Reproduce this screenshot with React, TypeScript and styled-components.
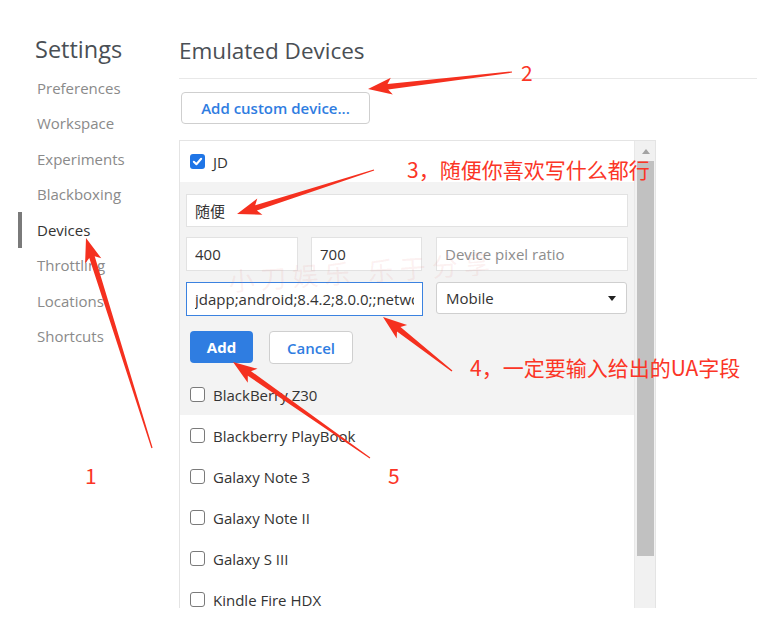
import React from "react";
import styled, { createGlobalStyle } from "styled-components";

const GlobalStyle = createGlobalStyle`
  html, body { margin: 0; padding: 0; background: #fff; }
  body {
    font-family: "Open Sans", "Noto Sans", "Noto Sans CJK SC", sans-serif;
    color: #333;
  }
`;

// layout

const Page = styled.div`
  position: relative;
  display: flex;
  width: 757px;
  height: 617px;
  overflow: hidden;
  background: #fff;
`;

const Sidebar = styled.nav`
  width: 179px;
  flex-shrink: 0;
  padding-top: 35px;
  display: flex;
  flex-direction: column;
`;

const SideTitle = styled.div`
  padding-left: 35px;
  height: 30px;
  line-height: 28px;
  font-size: 23.5px;
  color: #4a4f55;
  margin-bottom: 5px;
`;

const NavItem = styled.div<{ $active?: boolean }>`
  height: 35.5px;
  display: flex;
  align-items: center;
  margin-left: 18px;
  padding-left: 15px;
  border-left: 4px solid ${p => (p.$active ? "#7a7a7a" : "transparent")};
  font-size: 15px;
  color: ${p => (p.$active ? "#333" : "#8a8a8a")};
`;

const Main = styled.main`
  flex: 1;
  padding-top: 37px;
  display: flex;
  flex-direction: column;
`;

const MainTitle = styled.div`
  height: 30px;
  line-height: 28px;
  font-size: 22.5px;
  color: #4a4f55;
`;

const Divider = styled.div`
  margin-top: 11px;
  height: 1px;
  background: #e8e8e8;
`;

const Toolbar = styled.div`
  padding: 13px 0 16px 2px;
  display: flex;
`;

const GhostButton = styled.button<{ $w: number; $h?: number }>`
  width: ${p => p.$w}px;
  height: ${p => p.$h ?? 32}px;
  border: 1px solid #cfcfcf;
  border-radius: 4px;
  background: #fff;
  color: #2f7de1;
  font-family: inherit;
  font-size: 15px;
  font-weight: 600;
  padding: 0;
`;

const PrimaryButton = styled.button`
  width: 63px;
  height: 32px;
  border: none;
  border-radius: 4px;
  background: #2f7de1;
  color: #fff;
  font-family: inherit;
  font-size: 15px;
  font-weight: 700;
  padding: 0;
`;

const Panel = styled.div`
  width: 477px;
  height: 468px;
  box-sizing: border-box;
  border: 1px solid #e4e4e4;
  border-bottom: none;
  display: flex;
  overflow: hidden;
`;

const ListCol = styled.div`
  flex: 1;
  display: flex;
  flex-direction: column;
`;

const Row = styled.label<{ $hover?: boolean; $h?: number }>`
  flex-shrink: 0;
  height: ${p => p.$h ?? 41}px;
  display: flex;
  align-items: center;
  gap: 8px;
  padding-left: 10px;
  background: ${p => (p.$hover ? "#f3f3f3" : "#fff")};
  font-size: 15px;
  color: #333;
`;

const Box = styled.span<{ $checked?: boolean }>`
  width: 15px;
  height: 15px;
  box-sizing: border-box;
  border-radius: 3px;
  border: ${p => (p.$checked ? "none" : "1px solid #7a7a7a")};
  background: ${p => (p.$checked ? "#1f75e6" : "#fff")};
  display: flex;
  align-items: center;
  justify-content: center;
`;

const Editor = styled.div`
  flex-shrink: 0;
  background: #f3f3f3;
  padding: 12px 6px 10px 6px;
  display: flex;
  flex-direction: column;
`;

const FieldRow = styled.div<{ $mb?: number }>`
  display: flex;
  margin-bottom: ${p => p.$mb ?? 0}px;
`;

const Field = styled.input<{ $w?: number; $h?: number; $focus?: boolean; $ml?: number }>`
  width: ${p => (p.$w ? `${p.$w}px` : "100%")};
  height: ${p => p.$h ?? 34}px;
  margin: 0 0 0 ${p => p.$ml ?? 0}px;
  box-sizing: border-box;
  background: #fff;
  border: ${p => (p.$focus ? "1.5px solid #3b82e0" : "1px solid #e2e2e2")};
  border-radius: 0;
  outline: none;
  padding: 0 8px;
  font-family: "Open Sans", "Noto Sans CJK SC", sans-serif;
  font-size: 15px;
  color: #333;
  &::placeholder { color: #8d8d8d; }
`;

const Select = styled.div`
  width: 191px;
  height: 32px;
  margin-left: 13px;
  box-sizing: border-box;
  background: #fff;
  border: 1px solid #cfcfcf;
  border-radius: 3px;
  padding: 0 10px 0 9px;
  display: flex;
  align-items: center;
  justify-content: space-between;
  font-size: 15px;
  color: #333;
`;

const Caret = styled.span`
  width: 0;
  height: 0;
  border-left: 4.5px solid transparent;
  border-right: 4.5px solid transparent;
  border-top: 5px solid #222;
`;

const ButtonRow = styled.div`
  display: flex;
  gap: 16px;
  margin-top: 15px;
  padding-left: 4px;
`;

const Scrollbar = styled.div`
  width: 21px;
  flex-shrink: 0;
  background: #f1f1f1;
  border-left: 1px solid #e8e8e8;
  display: flex;
  flex-direction: column;
  align-items: center;
`;

const ScrollArrow = styled.div`
  height: 20px;
  display: flex;
  align-items: center;
  justify-content: center;
  &::after {
    content: "";
    border-left: 4px solid transparent;
    border-right: 4px solid transparent;
    border-bottom: 5px solid #a3a3a3;
  }
`;

const Thumb = styled.div`
  width: 17px;
  height: 395px;
  background: #c1c1c1;
`;

// annotations drawn over the screenshot

const Overlay = styled.svg`
  position: absolute;
  left: 0;
  top: 0;
  pointer-events: none;
`;

const Note = styled.span<{ $x: number; $y: number; $size?: number }>`
  position: absolute;
  left: ${p => p.$x}px;
  top: ${p => p.$y}px;
  font-family: "Noto Sans CJK SC", "Noto Sans", sans-serif;
  font-size: ${p => p.$size ?? 21}px;
  line-height: 1;
  color: #fb3526;
  white-space: nowrap;
  pointer-events: none;
`;

const Watermark = styled.span`
  position: absolute;
  left: 228px;
  top: 252px;
  transform: rotate(-4deg);
  font-family: "Noto Sans CJK SC", sans-serif;
  font-size: 26px;
  letter-spacing: 6px;
  color: rgba(226, 110, 110, 0.1);
  pointer-events: none;
`;

const arrowPoints = (tx: number, ty: number, hx: number, hy: number) => {
  const len = Math.hypot(hx - tx, hy - ty);
  const dx = (hx - tx) / len;
  const dy = (hy - ty) / len;
  const nx = -dy;
  const ny = dx;
  const L = 24;
  const pt = (d: number, w: number) =>
    `${(hx - dx * d + nx * w).toFixed(1)},${(hy - dy * d + ny * w).toFixed(1)}`;
  const tail = (w: number) => `${(tx + nx * w).toFixed(1)},${(ty + ny * w).toFixed(1)}`;
  return [
    tail(0.6),
    pt(L - 4, 2.8),
    pt(L, 8.5),
    pt(0, 0),
    pt(L, -8.5),
    pt(L - 4, -2.8),
    tail(-0.6),
  ].join(" ");
};

const ARROWS: [number, number, number, number][] = [
  [152, 448, 86, 238],
  [512, 72, 368, 89],
  [374, 170, 237, 214],
  [452, 371, 383, 317],
  [370, 458, 233, 362],
];

const NAV = ["Preferences", "Workspace", "Experiments", "Blackboxing", "Devices", "Throttling", "Locations", "Shortcuts"];

const DEVICES = ["BlackBerry Z30", "Blackberry PlayBook", "Galaxy Note 3", "Galaxy Note II", "Galaxy S III", "Kindle Fire HDX"];

const Check = ({ checked }: { checked?: boolean }) => (
  <Box $checked={checked}>
    {checked && (
      <svg width="11" height="11" viewBox="0 0 12 12">
        <path d="M2 6.3 L4.8 9 L10 3" fill="none" stroke="#fff" strokeWidth="2.2" strokeLinecap="round" strokeLinejoin="round" />
      </svg>
    )}
  </Box>
);

export default function App() {
  return (
    <>
      <GlobalStyle />
      <Page>
        <Sidebar>
          <SideTitle>Settings</SideTitle>
          {NAV.map(n => (
            <NavItem key={n} $active={n === "Devices"}>{n}</NavItem>
          ))}
        </Sidebar>

        <Main>
          <MainTitle>Emulated Devices</MainTitle>
          <Divider />
          <Toolbar>
            <GhostButton $w={189}>Add custom device...</GhostButton>
          </Toolbar>

          <Panel>
            <ListCol>
              <Row $h={41}>
                <Check checked />
                JD
              </Row>

              <Editor>
                <FieldRow $mb={10}>
                  <Field $h={33} readOnly value="随便" />
                </FieldRow>
                <FieldRow $mb={11}>
                  <Field $w={112} readOnly value="400" />
                  <Field $w={111} $ml={13} readOnly value="700" />
                  <Field $w={192} $ml={14} readOnly placeholder="Device pixel ratio" />
                </FieldRow>
                <FieldRow>
                  <Field $w={237} $focus readOnly value="jdapp;android;8.4.2;8.0.0;;network/wifi;model/MI 6" />
                  <Select>
                    Mobile
                    <Caret />
                  </Select>
                </FieldRow>
                <ButtonRow>
                  <PrimaryButton>Add</PrimaryButton>
                  <GhostButton $w={84} $h={33}>Cancel</GhostButton>
                </ButtonRow>
              </Editor>

              {DEVICES.map((d, i) => (
                <Row key={d} $hover={i === 0}>
                  <Check />
                  {d}
                </Row>
              ))}
            </ListCol>
            <Scrollbar>
              <ScrollArrow />
              <Thumb />
            </Scrollbar>
          </Panel>
        </Main>

        <Watermark>小刀娱乐 乐于分享</Watermark>

        <Overlay width="757" height="617">
          {ARROWS.map((a, i) => (
            <polygon key={i} points={arrowPoints(...a)} fill="#f5301f" />
          ))}
        </Overlay>

        <Note $x={85} $y={465}>1</Note>
        <Note $x={521} $y={62}>2</Note>
        <Note $x={407} $y={159}>3，随便你喜欢写什么都行</Note>
        <Note $x={470} $y={357}>4，一定要输入给出的UA字段</Note>
        <Note $x={388} $y={465}>5</Note>
      </Page>
    </>
  );
}
